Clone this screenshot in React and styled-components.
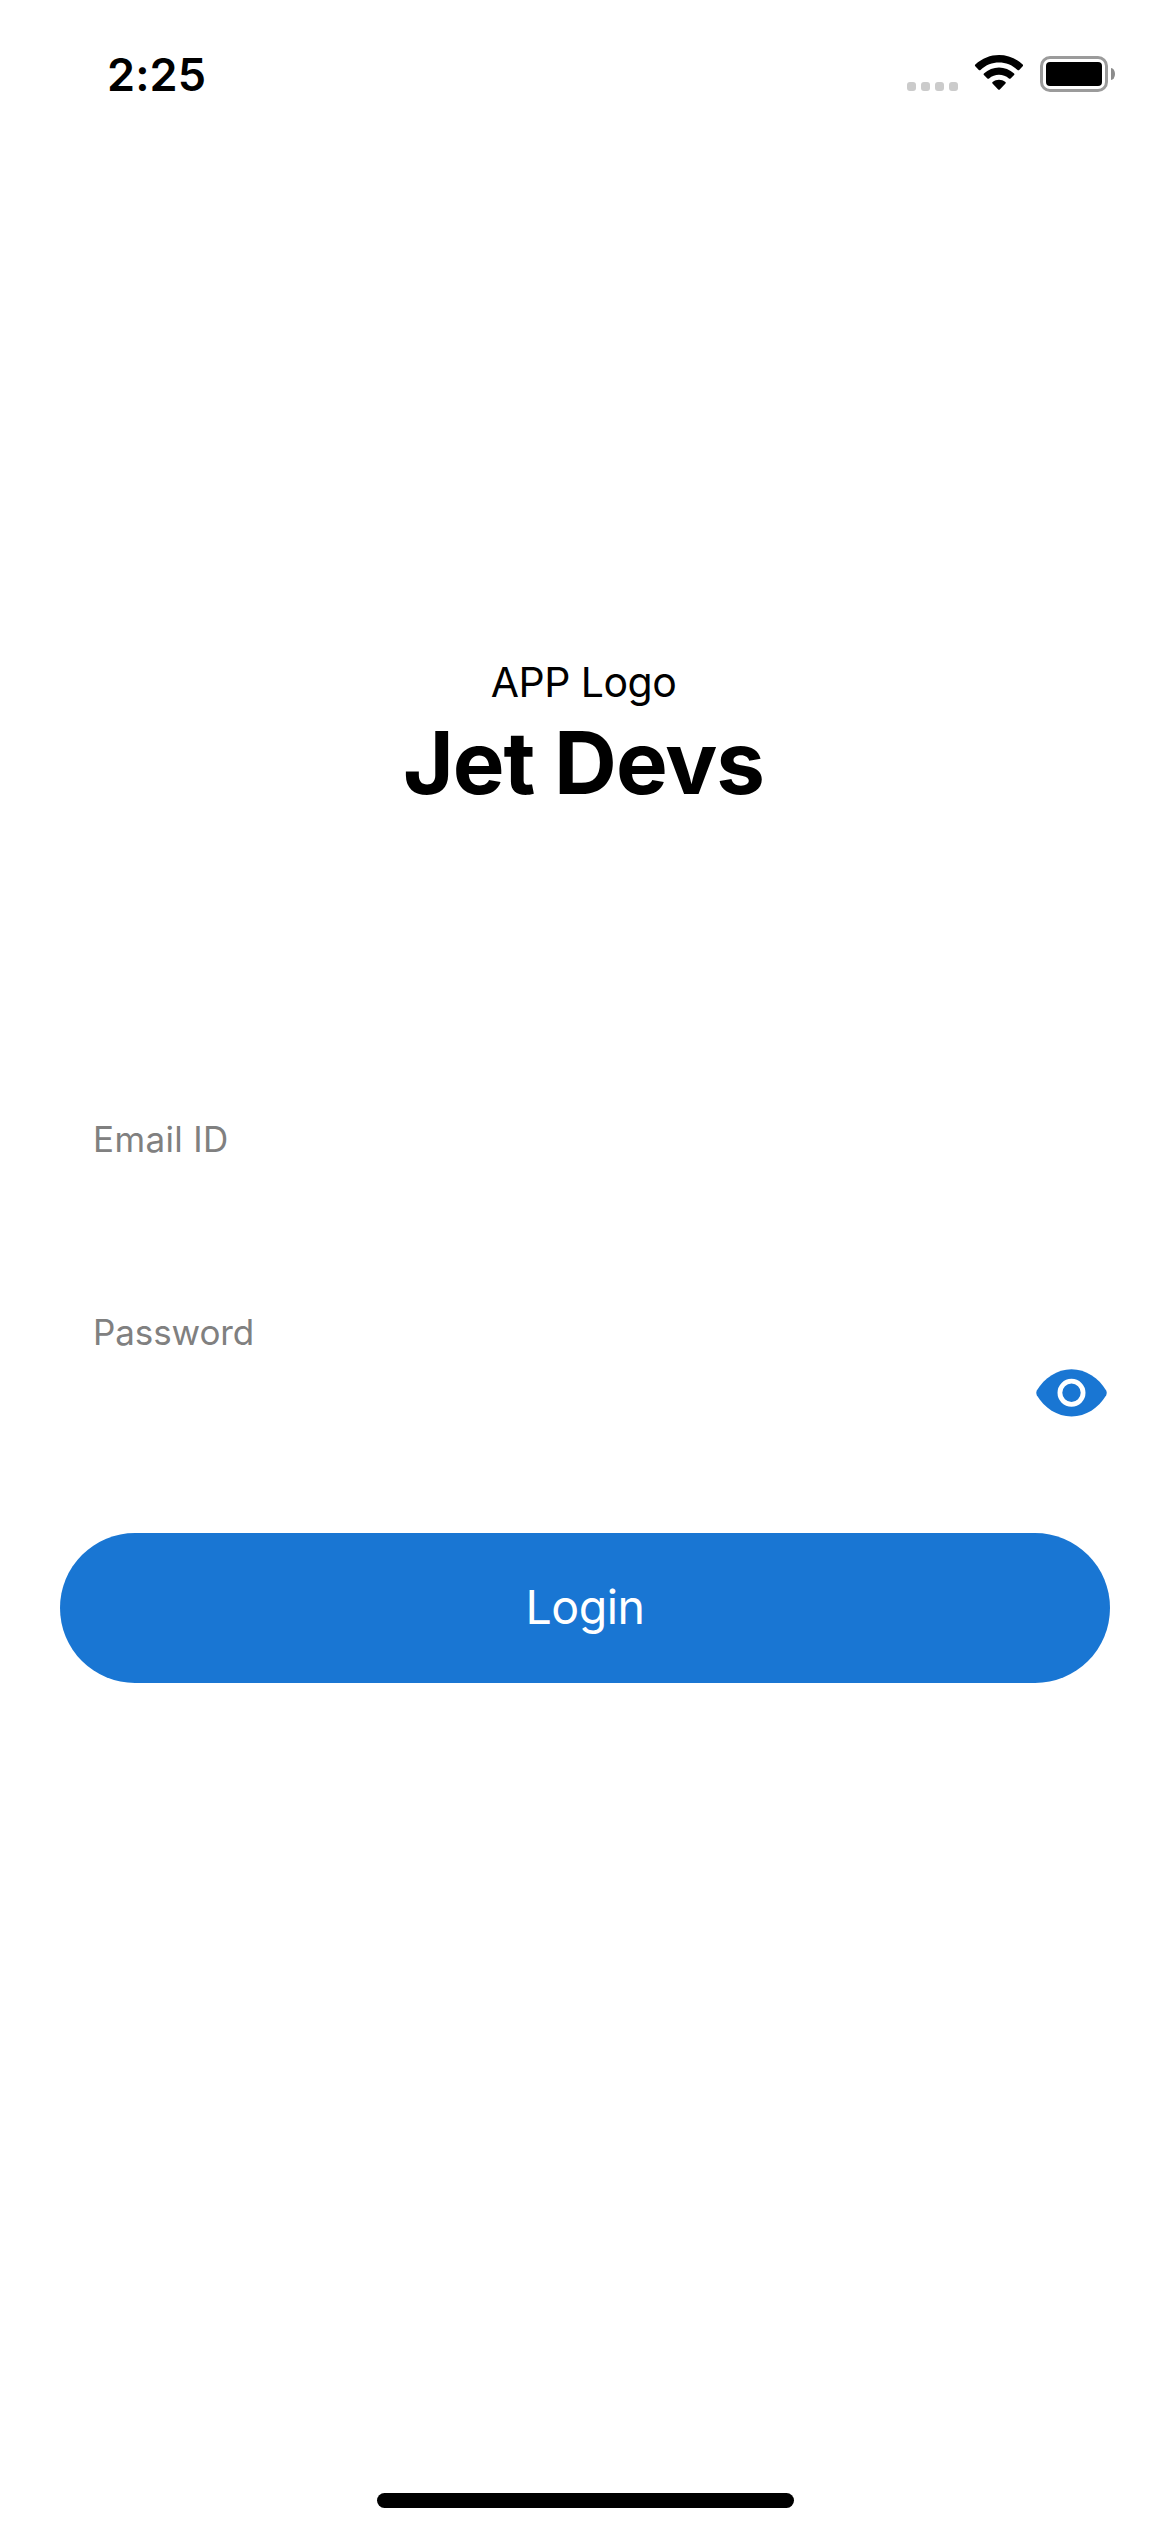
import React from "react";
import styled, { createGlobalStyle } from "styled-components";

const GlobalStyle = createGlobalStyle`
  *, *::before, *::after { box-sizing: border-box; }
  body { margin: 0; background: #ffffff; font-family: Inter, "Liberation Sans", sans-serif; }
`;

const Screen = styled.main`
  display: flex;
  flex-direction: column;
  width: 1170px;
  height: 2532px;
  background: #ffffff;
  color: #000000;
`;

const StatusBar = styled.header`
  display: flex;
  justify-content: space-between;
  align-items: flex-start;
  height: 141px;
  padding: 45px 55px 0 107px;
`;

const Time = styled.time`
  font-size: 45px;
  font-weight: 600;
  line-height: 60px;
  letter-spacing: 0.1px;
`;

const Indicators = styled.div`
  display: flex;
  align-items: flex-end;
  height: 47px;
`;

const SignalDots = styled.div`
  display: flex;
  gap: 5px;
  margin: 0 16px 1px 0;
`;

const Dot = styled.span`
  width: 9px;
  height: 9px;
  border-radius: 3px;
  background: #cbcbcb;
`;

const WifiIcon = styled.svg`
  width: 50px;
  height: 38px;
  margin-right: 16px;
`;

const Battery = styled.div`
  display: flex;
  align-items: center;
  gap: 3px;
`;

const BatteryCase = styled.div`
  width: 68px;
  height: 36px;
  padding: 3px;
  border: 3px solid #9b9b9b;
  border-radius: 10px;
`;

const BatteryLevel = styled.div`
  height: 24px;
  border-radius: 4px;
  background: #000000;
`;

const BatteryTip = styled.span`
  width: 4px;
  height: 12px;
  border-radius: 0 4px 4px 0 / 0 6px 6px 0;
  background: #8c8c8c;
`;

const Brand = styled.section`
  display: flex;
  flex-direction: column;
  align-items: center;
  gap: 2px;
  margin-top: 516px;
  padding-right: 3px;
`;

const BrandCaption = styled.p`
  margin: 0;
  font-size: 41px;
  line-height: 50px;
  letter-spacing: -0.5px;
`;

const BrandName = styled.h1`
  margin: 0;
  font-size: 87px;
  font-weight: 700;
  line-height: 107px;
  letter-spacing: -1px;
`;

const Form = styled.form`
  display: flex;
  flex-direction: column;
  margin-top: 302px;
  padding: 0 60px;
`;

const Field = styled.div`
  display: flex;
  flex-direction: column;
  margin-bottom: ${(p) => p.$gap}px;
`;

const Label = styled.label`
  padding-left: 33px;
  color: #808080;
  font-size: 35px;
  line-height: 43px;
  letter-spacing: ${(p) => p.$tracking}px;
`;

const InputRow = styled.div`
  display: flex;
  align-items: center;
  height: 78px;
  padding: 0 3px 0 33px;
`;

const Input = styled.input`
  flex: 1;
  min-width: 0;
  height: 100%;
  padding: 0;
  border: 0;
  outline: 0;
  background: transparent;
  font: inherit;
  font-size: 42px;
`;

const RevealButton = styled.button`
  display: flex;
  padding: 0;
  border: 0;
  background: transparent;
`;

const LoginButton = styled.button`
  height: 150px;
  padding: 0 0 2px;
  border: 0;
  border-radius: 75px;
  background: #1976d3;
  color: #ffffff;
  font-family: inherit;
  font-size: 46.5px;
  font-weight: 400;
  line-height: 56px;
  letter-spacing: -0.5px;
`;

const HomeIndicator = styled.div`
  align-self: center;
  width: 417px;
  height: 15px;
  margin: auto 0 24px 1px;
  border-radius: 8px;
  background: #000000;
`;

function Wifi() {
  return (
    <WifiIcon viewBox="0 0 50 38" aria-hidden="true">
      <path d="M1.3 12.3 Q0.5 11.4 1.3 10.6 C15 -2.2 35 -2.2 48.7 10.6 Q49.5 11.4 48.7 12.3 L45.2 15.9 Q44.4 16.7 43.5 15.9 C33 6.1 17 6.1 6.5 15.9 Q5.6 16.7 4.8 15.9 Z" />
      <path d="M9.9 21 Q9.1 20.2 9.9 19.4 C18.5 11.4 31.5 11.4 40.1 19.4 Q40.9 20.2 40.1 21 L36.6 24.5 Q35.8 25.2 34.9 24.5 C29.4 19.6 20.6 19.6 15.1 24.5 Q14.2 25.2 13.4 24.5 Z" />
      <path d="M18.5 29.6 Q17.7 28.8 18.6 28 C22.5 25 27.5 25 31.4 28 Q32.3 28.8 31.5 29.6 L25.8 35.4 Q25 36.2 24.2 35.4 Z" />
    </WifiIcon>
  );
}

function Eye() {
  return (
    <svg width="71" height="48" viewBox="0 0 71 48" aria-hidden="true">
      <path fill="#1976d3" d="M0.8 21.4 C8.5 9 21 0.3 35.5 0.3 C50 0.3 62.5 9 70.2 21.4 Q71.2 23.8 70.2 26.2 C62.5 39 50 47.4 35.5 47.4 C21 47.4 8.5 39 0.8 26.2 Q-0.2 23.8 0.8 21.4 Z" />
      <circle cx="35.5" cy="23.8" r="11.6" fill="none" stroke="#ffffff" strokeWidth="4.8" />
    </svg>
  );
}

export default function App() {
  return (
    <>
      <GlobalStyle />
      <Screen>
        <StatusBar>
          <Time>2:25</Time>
          <Indicators>
            <SignalDots>
              <Dot />
              <Dot />
              <Dot />
              <Dot />
            </SignalDots>
            <Wifi />
            <Battery>
              <BatteryCase>
                <BatteryLevel />
              </BatteryCase>
              <BatteryTip />
            </Battery>
          </Indicators>
        </StatusBar>
        <Brand>
          <BrandCaption>APP Logo</BrandCaption>
          <BrandName>Jet Devs</BrandName>
        </Brand>
        <Form onSubmit={(e) => e.preventDefault()}>
          <Field $gap={72}>
            <Label htmlFor="email" $tracking={0.35}>Email ID</Label>
            <InputRow>
              <Input id="email" type="email" />
            </InputRow>
          </Field>
          <Field $gap={101}>
            <Label htmlFor="password" $tracking={-0.1}>Password</Label>
            <InputRow>
              <Input id="password" type="password" />
              <RevealButton type="button" aria-label="Show password">
                <Eye />
              </RevealButton>
            </InputRow>
          </Field>
          <LoginButton type="submit">Login</LoginButton>
        </Form>
        <HomeIndicator />
      </Screen>
    </>
  );
}
